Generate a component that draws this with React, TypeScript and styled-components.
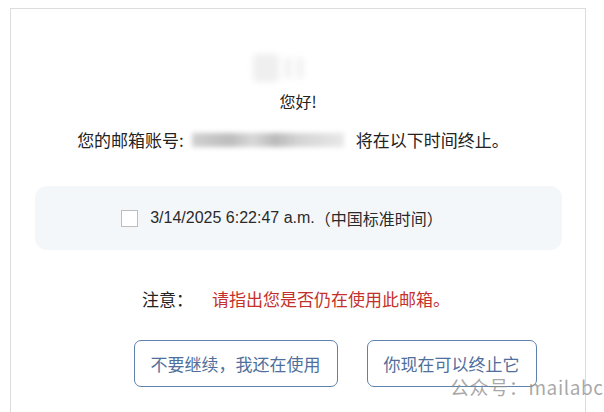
import React from 'react';
import styled, { createGlobalStyle } from 'styled-components';

const GlobalStyle = createGlobalStyle`
  html, body {
    margin: 0;
    padding: 0;
    background: #fff;
    overflow: hidden;
  }
  body {
    font-family: 'Noto Sans CJK SC', 'Liberation Sans', sans-serif;
    color: #333;
  }
`;

const Page = styled.div`
  position: relative;
  width: 604px;
  height: 412px;
  overflow: hidden;
`;

const Card = styled.div`
  margin: 8px 0 0 10px;
  width: 574px;
  height: 420px;
  border: 1px solid #dcdcdc;
  border-bottom: none;
  display: flex;
  flex-direction: column;
  align-items: center;
`;

const Logo = styled.div`
  margin-top: 44px;
  height: 30px;
  display: flex;
  gap: 6px;
  align-items: center;
  filter: blur(3px);
  padding-right: 40px;
  span {
    display: block;
    background: #efefef;
    border-radius: 4px;
  }
`;

const Greeting = styled.div`
  margin-top: 7px;
  font-size: 16px;
  line-height: 22px;
  color: #222;
`;

const AccountLine = styled.div`
  margin-top: 15px;
  display: flex;
  align-items: center;
  font-size: 17px;
  line-height: 26px;
  color: #222;
  padding-right: 10px;
`;

const Blurred = styled.span`
  display: inline-block;
  width: 152px;
  height: 14px;
  margin: 0 12px 0 8px;
  background: linear-gradient(
    90deg,
    #d0d0d0 0%,
    #bdbdbd 25%,
    #d8d8d8 40%,
    #bababa 55%,
    #d4d4d4 70%,
    #e8e8e8 100%
  );
  filter: blur(2.5px);
`;

const TimeBox = styled.div`
  margin-top: 33px;
  width: 527px;
  height: 64px;
  border-radius: 12px;
  background: #f4f7fa;
  display: flex;
  align-items: center;
  justify-content: center;
  padding-right: 32px;
  box-sizing: border-box;
  font-size: 16px;
  color: #2a2a2a;
`;

const Check = styled.span`
  width: 15px;
  height: 15px;
  border: 1px solid #bdbdbd;
  background: #fff;
  margin-right: 12px;
`;

const Stamp = styled.span`
  font-family: 'Liberation Sans', 'Noto Sans CJK SC', sans-serif;
`;

const Zone = styled.span`
  font-family: 'Noto Sans CJK SC', sans-serif;
`;

const Notice = styled.div`
  margin-top: 37px;
  display: flex;
  align-items: center;
  font-size: 17px;
  line-height: 24px;
  padding-right: 4px;
`;

const NoticeLabel = styled.span`
  color: #222;
  margin-right: 19px;
`;

const NoticeText = styled.span`
  color: #c4302b;
`;

const Actions = styled.div`
  margin-top: 29px;
  display: flex;
  gap: 29px;
  padding-left: 74px;
`;

const ActionButton = styled.button`
  height: 47px;
  padding: 0 16px;
  border: 1px solid #5d82ad;
  border-radius: 7px;
  background: #fff;
  color: #4f6f9c;
  font-family: 'Noto Sans CJK SC', sans-serif;
  font-size: 17px;
  cursor: pointer;
`;

const Watermark = styled.div`
  position: absolute;
  left: 450px;
  top: 373px;
  font-size: 19px;
  line-height: 28px;
  color: rgba(140, 140, 140, 0.75);
  font-family: 'Noto Sans CJK SC', sans-serif;
  letter-spacing: 0.6px;
  white-space: nowrap;
`;

const App = () => {
  return (
    <Page>
      <GlobalStyle />
      <Card>
        <Logo>
          <span style={{ width: 26, height: 28 }} />
          <span style={{ width: 6, height: 22 }} />
          <span style={{ width: 6, height: 22 }} />
        </Logo>
        <Greeting>您好!</Greeting>
        <AccountLine>
          您的邮箱账号:
          <Blurred />
          将在以下时间终止。
        </AccountLine>
        <TimeBox>
          <Check />
          <Stamp>3/14/2025 6:22:47 a.m.</Stamp>
          <Zone>（中国标准时间）</Zone>
        </TimeBox>
        <Notice>
          <NoticeLabel>注意：</NoticeLabel>
          <NoticeText>请指出您是否仍在使用此邮箱。</NoticeText>
        </Notice>
        <Actions>
          <ActionButton>不要继续，我还在使用</ActionButton>
          <ActionButton>你现在可以终止它</ActionButton>
        </Actions>
      </Card>
      <Watermark>公众号：mailabc</Watermark>
    </Page>
  );
};

export default App;
